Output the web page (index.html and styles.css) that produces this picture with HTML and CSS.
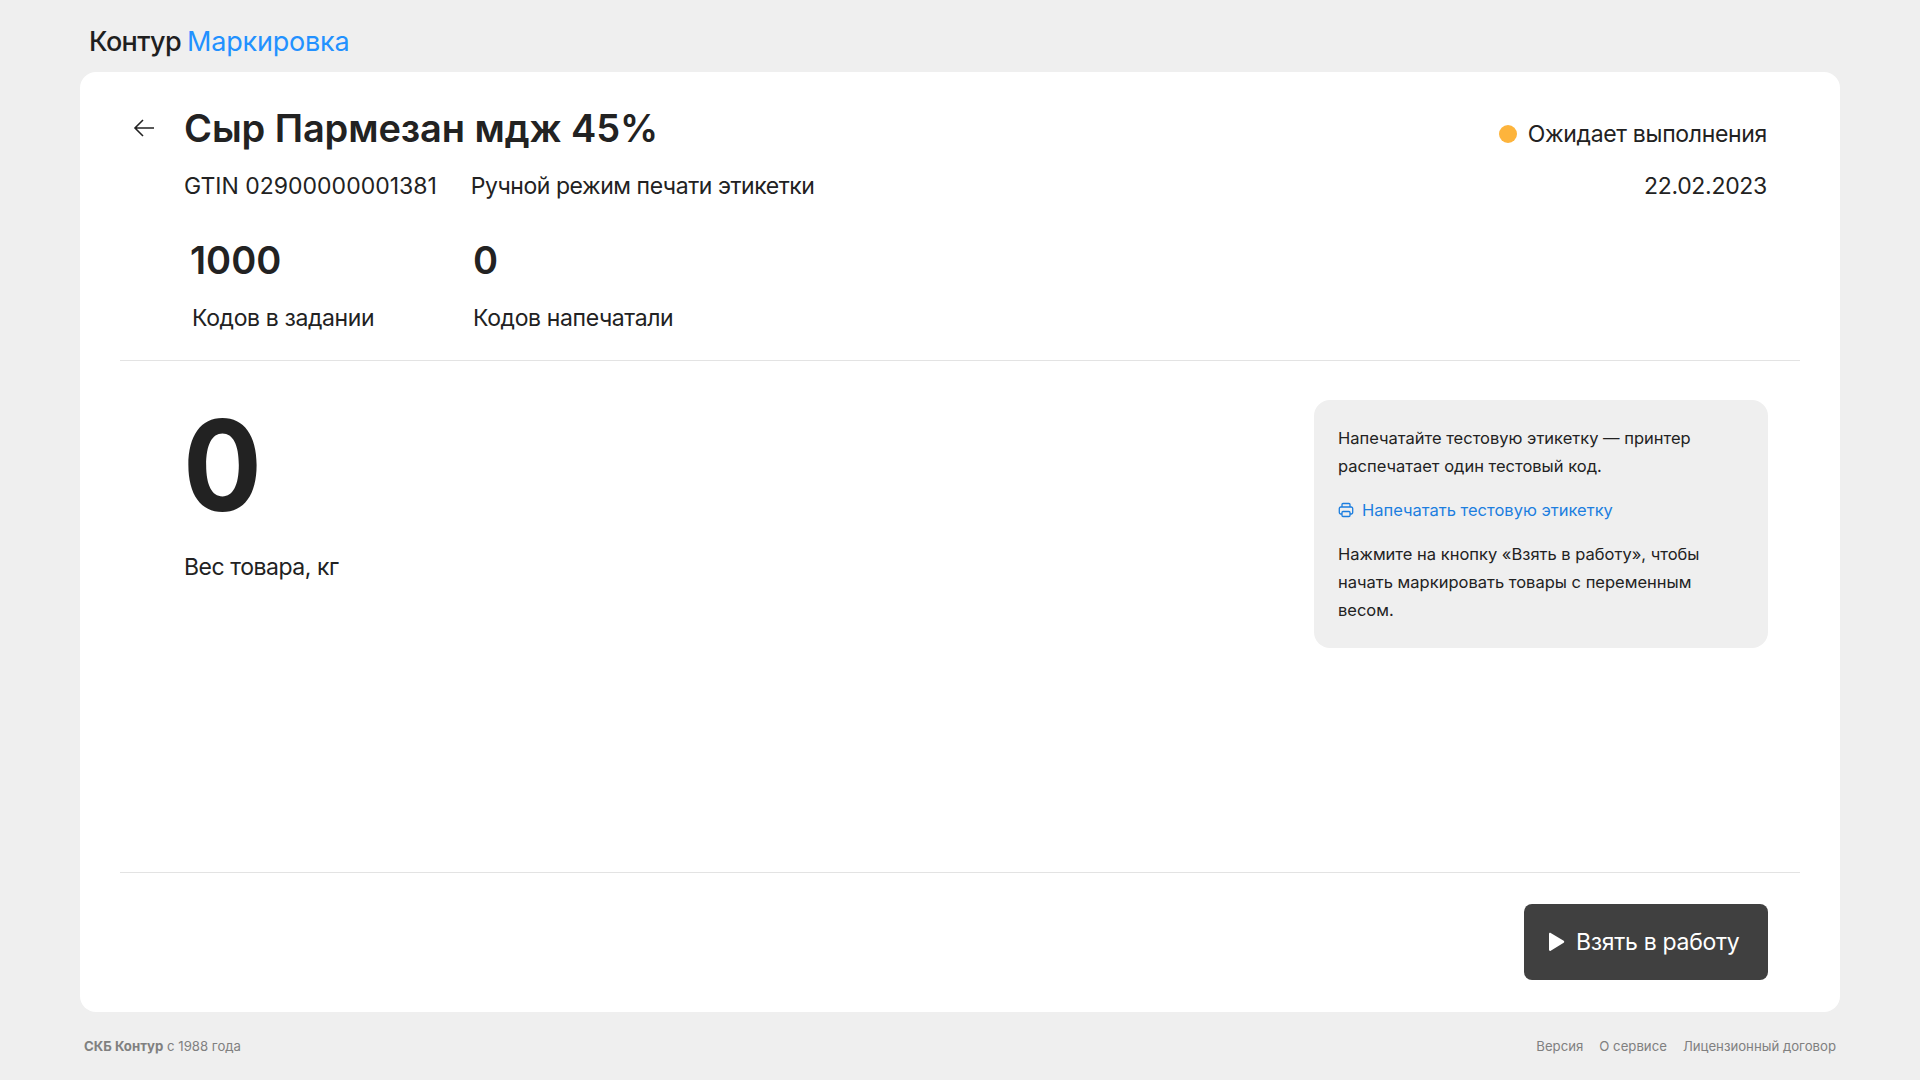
FILE: index.html
```html
<!DOCTYPE html>
<html lang="ru">
<head>
    <meta charset="utf-8">
    <title>Контур Маркировка</title>
    <link rel="stylesheet" href="styles.css">
</head>
<body>
<header class="topbar">
    <span class="logo-black">Контур</span>
    <span class="logo-blue">Маркировка</span>
</header>
<main class="card">
    <section class="summary">
        <div class="title-row">
            <a class="back">
                <svg width="22" height="20" viewBox="0 0 22 20" fill="none" stroke="#222" stroke-width="1.6">
                    <path d="M21 10H2M10 2l-8 8 8 8"/>
                </svg>
            </a>
            <h1>Сыр Пармезан мдж 45%</h1>
            <div class="status"><i class="dot"></i>Ожидает выполнения</div>
        </div>
        <div class="meta-row">
            <span class="gtin">GTIN 02900000001381</span>
            <span class="mode">Ручной режим печати этикетки</span>
            <span class="date">22.02.2023</span>
        </div>
        <div class="stats">
            <div class="stat stat-first">
                <div class="stat-value">1000</div>
                <div class="stat-label">Кодов в задании</div>
            </div>
            <div class="stat">
                <div class="stat-value">0</div>
                <div class="stat-label">Кодов напечатали</div>
            </div>
        </div>
    </section>
    <section class="work">
        <div class="weight">
            <div class="weight-value">0</div>
            <div class="weight-label">Вес товара, кг</div>
        </div>
        <aside class="hint">
            <p>Напечатайте тестовую этикетку — принтер распечатает один тестовый код.</p>
            <a class="hint-link">
                <svg width="16" height="16" viewBox="0 0 16 16" fill="none" stroke="#1c7edf" stroke-width="1.3">
                    <path d="M4 5V2.5A1 1 0 0 1 5 1.500h6a1 1 0 0 1 1 1V5"/>
                    <path d="M4 12H2.800A1.500 1.500 0 0 1 1.300 10.500V6.500A1.500 1.500 0 0 1 2.800 5h10.400a1.500 1.500 0 0 1 1.500 1.500v4a1.500 1.500 0 0 1-1.500 1.500H12"/>
                    <rect x="4" y="9.500" width="8" height="5" rx="1"/>
                </svg>
                Напечатать тестовую этикетку
            </a>
            <p>Нажмите на кнопку «Взять в работу», чтобы начать маркировать товары с переменным весом.</p>
        </aside>
    </section>
    <section class="actions">
        <button class="start">
            <svg width="17" height="20" viewBox="0 0 17 20" fill="#fff">
                <path d="M1 1.800C1 .9 1.900.4 2.700.9l13 7.800c.7.5.7 1.600 0 2l-13 8c-.8.500-1.700 0-1.700-.9z"/>
            </svg>
            Взять в работу
        </button>
    </section>
</main>
<footer class="bottom">
    <div><b>СКБ Контур</b> с 1988 года</div>
    <nav class="bottom-links">
        <a>Версия</a>
        <a>О сервисе</a>
        <a>Лицензионный договор</a>
    </nav>
</footer>
</body>
</html>
```

FILE: styles.css
```css
body {
    font-family: Inter, "Noto Sans", sans-serif;
    margin: 0;
    padding: 0 80px;
    height: 1080px;
    overflow: hidden;
    background-color: #efefef;
    color: #222222;
    box-sizing: border-box;
}
.topbar {
    height: 72px;
    padding: 10px 9px 0;
    box-sizing: border-box;
    display: flex;
    align-items: center;
    gap: 6px;
    font-size: 27px;
}
.logo-black {
    font-weight: 500;
    color: #1f1f1f;
    letter-spacing: -0.6px;
}
.logo-blue {
    color: #2291ff;
    letter-spacing: -0.2px;
}
.card {
    background-color: white;
    border-radius: 16px;
    height: 940px;
    padding: 0 40px;
    box-sizing: border-box;
    display: flex;
    flex-direction: column;
}
.summary {
    height: 289px;
    border-bottom: 1px solid #e3e3e3;
    box-sizing: border-box;
    padding-right: 33px;
}
.title-row {
    display: flex;
    align-items: center;
    padding-top: 30px;
    height: 52px;
}
.back {
    width: 64px;
    padding-left: 13px;
    box-sizing: border-box;
    display: flex;
}
h1 {
    font-size: 38px;
    line-height: 52px;
    font-weight: 600;
    margin: 0;
    letter-spacing: -0.1px;
}
.status {
    margin-left: auto;
    display: flex;
    align-items: center;
    gap: 11px;
    font-size: 23px;
    letter-spacing: -0.33px;
    padding-top: 11px;
}
.dot {
    width: 18px;
    height: 18px;
    border-radius: 50%;
    background-color: #fdb43c;
}
.meta-row {
    display: flex;
    padding-left: 64px;
    margin-top: 16px;
    font-size: 23px;
    line-height: 32px;
}
.gtin {
    margin-right: 34px;
}
.mode {
    letter-spacing: -0.45px;
}
.date {
    margin-left: auto;
    letter-spacing: -0.3px;
}
.stats {
    display: flex;
    padding-left: 64px;
    margin-top: 32px;
}
.stat {
    width: 289px;
}
.stat-first {
    padding-left: 6px;
    box-sizing: border-box;
}
.stat-value {
    font-size: 38px;
    line-height: 52px;
    font-weight: 600;
}
.stat-label {
    font-size: 23px;
    line-height: 32px;
    margin-top: 16px;
    letter-spacing: -0.38px;
}
.stat-first .stat-label {
    padding-left: 2px;
}
.work {
    height: 512px;
    border-bottom: 1px solid #e3e3e3;
    box-sizing: border-box;
    display: flex;
    justify-content: space-between;
    align-items: flex-start;
    padding: 39px 32px 0 64px;
}
.weight-value {
    font-size: 126px;
    line-height: 130px;
    font-weight: 700;
    margin-left: -1px;
    transform: scaleX(0.93);
    transform-origin: left;
}
.weight-label {
    font-size: 23px;
    line-height: 32px;
    margin-top: 21px;
    letter-spacing: -0.45px;
}
.hint {
    width: 454px;
    height: 248px;
    box-sizing: border-box;
    padding: 24px;
    background-color: #efefef;
    border-radius: 16px;
    font-size: 16.5px;
    line-height: 28px;
}
.hint p {
    margin: 0;
}
.hint-link {
    display: flex;
    align-items: center;
    gap: 8px;
    color: #1c7edf;
    margin: 16px 0;
}
.actions {
    display: flex;
    justify-content: flex-end;
    padding: 31px 32px 0 0;
}
.start {
    width: 244px;
    height: 76px;
    background-color: #404040;
    color: white;
    border: none;
    border-radius: 8px;
    font-family: inherit;
    font-size: 23px;
    letter-spacing: -0.3px;
    display: flex;
    align-items: center;
    gap: 11px;
    padding: 0 0 0 24px;
}
.bottom {
    display: flex;
    justify-content: space-between;
    padding: 26px 4px 0;
    font-size: 13.2px;
    line-height: 16px;
    color: #808080;
}
.bottom-links {
    display: flex;
    gap: 16px;
}
```
